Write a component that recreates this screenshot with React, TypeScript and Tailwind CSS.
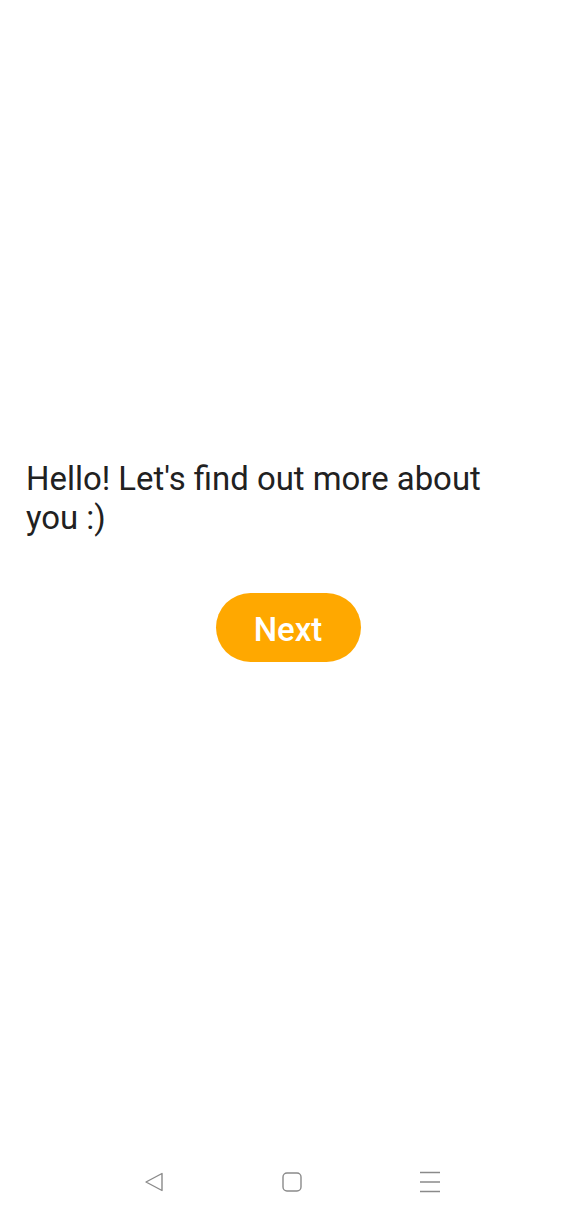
export default function App() {
  return (
    <div
      className="w-[576px] h-[1216px] bg-white flex flex-col"
      style={{ fontFamily: "Roboto, 'Noto Sans', sans-serif" }}
    >
      <div className="flex-1 flex flex-col pt-[459px]">
        {/* Greeting */}
        <p className="pl-[26px] pr-[60px] text-[32.9px] leading-[39px] text-[#212121]">
          Hello! Let's find out more about you :)
        </p>

        <div className="mt-[56px] flex justify-center">
          <button className="w-[145px] h-[69px] pt-[4px] rounded-full bg-[#ffa800] text-white text-[33px] font-medium">
            Next
          </button>
        </div>
      </div>

      {/* System nav bar */}
      <div className="h-[70px] flex items-center justify-center gap-[116px] pl-[8px] pt-[2px]">
        <svg width="22" height="22" viewBox="0 0 22 22" fill="none" stroke="#8a8a8a" strokeWidth="1.4" strokeLinejoin="round">
          <path d="M19 2.5 L3 11 L19 19.5 Z" />
        </svg>
        <svg width="22" height="22" viewBox="0 0 22 22" fill="none" stroke="#8a8a8a" strokeWidth="1.4">
          <rect x="2" y="2" width="18" height="18" rx="4" />
        </svg>
        <svg width="22" height="22" viewBox="0 0 22 22" fill="none" stroke="#8a8a8a" strokeWidth="1.4">
          <path d="M1 1.5 H21 M1 11 H21 M1 20.5 H21" />
        </svg>
      </div>
    </div>
  )
}
